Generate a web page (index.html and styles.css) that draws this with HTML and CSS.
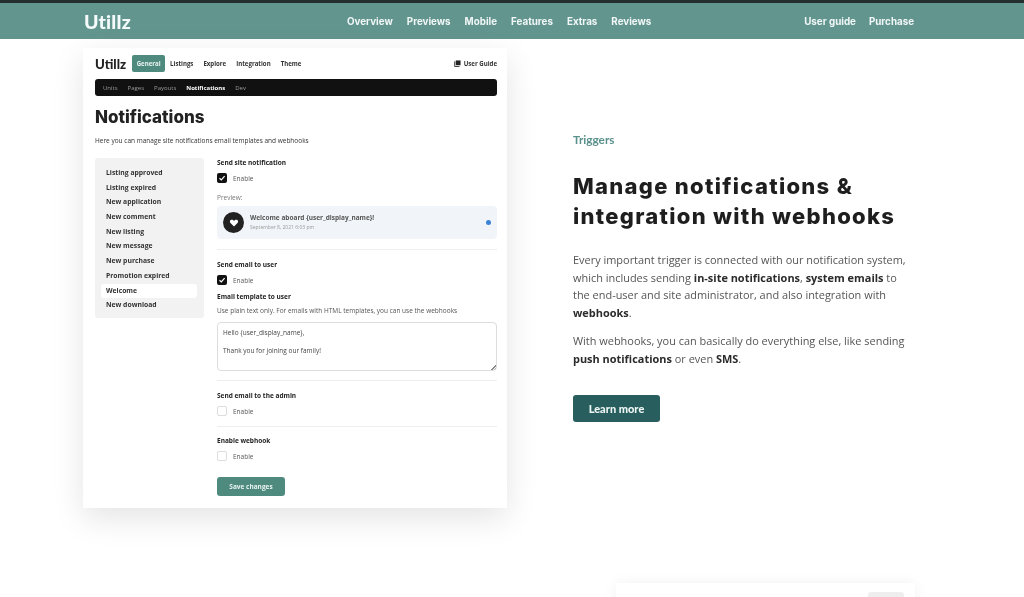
FILE: index.html
```html
<!DOCTYPE html>
<html lang="en">
<head>
<meta charset="utf-8">
<title>Utillz</title>
<link rel="stylesheet" href="styles.css">
</head>
<body>
<header class="topbar">
  <a class="logo">Utillz</a>
  <nav class="nav-main"><a>Overview</a><a>Previews</a><a>Mobile</a><a>Features</a><a>Extras</a><a>Reviews</a></nav>
  <nav class="nav-side"><a>User guide</a><a>Purchase</a></nav>
</header>
<main class="feature">
  <section class="card">
    <div class="app-head">
      <span class="app-logo">Utillz</span>
      <span class="tab tab-active">General</span>
      <span class="tab">Listings</span><span class="tab">Explore</span><span class="tab">Integration</span><span class="tab">Theme</span>
      <span class="guide">
        <svg class="guide-icon" viewBox="0 0 8 8"><path d="M2 .5h5.500v5.500h-5.500z" fill="#222"/><path d="M.8 1.500v6h5.500" fill="none" stroke="#222"/></svg>
        User Guide
      </span>
    </div>
    <div class="subnav"><span>Units</span><span>Pages</span><span>Payouts</span><span class="sub-active">Notifications</span><span>Dev</span></div>
    <h2 class="app-title">Notifications</h2>
    <p class="app-desc">Here you can manage site notifications email templates and webhooks</p>
    <div class="app-body">
      <ul class="side">
        <li>Listing approved</li><li>Listing expired</li><li>New application</li><li>New comment</li><li>New listing</li><li>New message</li><li>New purchase</li><li>Promotion expired</li><li class="side-active">Welcome</li><li>New download</li>
      </ul>
      <div class="form">
        <div class="label">Send site notification</div>
        <div class="check"><span class="box box-on"><svg viewBox="0 0 10 10"><path d="M2.500 5.200l1.800 1.700 3.300-3.700" fill="none" stroke="#fff" stroke-width="1.200"/></svg></span>Enable</div>
        <div class="preview-label">Preview:</div>
        <div class="preview">
          <span class="avatar"><svg viewBox="0 0 10 10"><path d="M5 8.500 1.500 5C.2 3.500 1.200 1.800 2.800 1.800c1 0 1.700.5 2.200 1.200.5-.7 1.200-1.200 2.200-1.200 1.600 0 2.600 1.700 1.300 3.200z" fill="#fff"/></svg></span>
          <div class="preview-text"><strong>Welcome aboard {user_display_name}!</strong><small>September 8, 2021 6:03 pm</small></div>
          <span class="dot"></span>
        </div>
        <hr class="rule rule-a">
        <div class="label">Send email to user</div>
        <div class="check"><span class="box box-on"><svg viewBox="0 0 10 10"><path d="M2.500 5.200l1.800 1.700 3.300-3.700" fill="none" stroke="#fff" stroke-width="1.200"/></svg></span>Enable</div>
        <div class="label label-tpl">Email template to user</div>
        <div class="hint">Use plain text only. For emails with HTML templates, you can use the webhooks</div>
        <div class="textarea">Hello {user_display_name},<br><br>Thank you for joining our family!</div>
        <hr class="rule rule-b">
        <div class="label">Send email to the admin</div>
        <div class="check"><span class="box"></span>Enable</div>
        <hr class="rule rule-c">
        <div class="label">Enable webhook</div>
        <div class="check"><span class="box"></span>Enable</div>
        <button class="save">Save changes</button>
      </div>
    </div>
  </section>
  <section class="copy">
    <div class="eyebrow">Triggers</div>
    <h1 class="headline">Manage notifications &amp; integration with webhooks</h1>
    <p class="para">Every important trigger is connected with our notification system, which includes sending <b>in-site notifications</b>, <b>system emails</b> to the end-user and site administrator, and also integration with <b>webhooks</b>.</p>
    <p class="para">With webhooks, you can basically do everything else, like sending <b>push notifications</b> or even <b>SMS</b>.</p>
    <a class="cta">Learn more</a>
  </section>
</main>
<div class="next-wrap"><div class="next-card"><span class="next-chip"></span></div></div>
</body>
</html>
```
FILE: styles.css
```css
* { box-sizing: border-box; }
html, body { height: 597px; overflow: hidden; }
body { margin: 0; background: #fff; color: #222; font-family: "Open Sans", sans-serif; filter: blur(.35px); }
.topbar { height: 39px; border-top: 3px solid #23302f; background: #63958f; display: flex; align-items: center; padding: 0 110px 0 84px; color: #f0f7f6; font-family: Inter, sans-serif; font-weight: 700; font-size: 9.800px; }
.logo { font-family: Lato, sans-serif; font-size: 19.500px; font-weight: 900; color: #f5fafa; width: 263px; letter-spacing: .2px; }
.nav-main, .nav-side { display: flex; gap: 14px; }
.nav-side { margin-left: auto; gap: 13px; }
.feature { display: grid; grid-template-columns: 424px 345px; column-gap: 66px; padding: 9px 0 0 83px; }
.card { height: 460px; background: #fff; box-shadow: 0 10px 30px rgba(0,0,0,.11); padding: 0 10px 0 12px; }
.app-head { height: 31px; padding-top: 0; display: flex; align-items: center; font-size: 6.100px; font-weight: 700; color: #333; }
.app-logo { font-family: Lato, sans-serif; font-weight: 900; font-size: 13.200px; color: #222; margin-right: 6px; }
.tab { margin-right: 10px; }
.tab-active { background: #4f8a7f; color: #e9f3f1; border-radius: 2px; padding: 4px 4.500px; margin-right: 5px; }
.guide { margin-left: auto; display: flex; align-items: center; gap: 3px; }
.guide-icon { width: 7px; height: 7px; }
.subnav { height: 17px; background: #111; border-radius: 3px; display: flex; align-items: center; gap: 10px; padding: 0 8px; font-size: 6px; color: #999; }
.sub-active { color: #fff; font-weight: 700; }
.app-title { margin: 10px 0 0; font-family: Inter, sans-serif; font-weight: 800; font-size: 17px; line-height: 22px; color: #222; }
.app-desc { margin: 8px 0 0; font-size: 6.500px; line-height: 10px; color: #333; }
.app-body { display: flex; gap: 13px; margin-top: 12px; align-items: flex-start; }
.side { list-style: none; margin: 0; padding: 8px 7px 6px 6px; width: 109px; height: 160px; background: #f2f2f2; border-radius: 3px; font-size: 6.800px; font-weight: 700; color: #333; }
.side li { height: 14.700px; line-height: 14.700px; padding-left: 5px; }
.side .side-active { background: #fff; border-radius: 3px; }
.form { flex: 1; font-size: 6.500px; color: #555; }
.label { font-weight: 700; color: #222; line-height: 10px; height: 10px; }
.label-tpl { margin-top: 7px; }
.check { display: flex; align-items: center; gap: 6px; height: 10px; margin-top: 5px; }
.box { width: 10px; height: 10px; border: 1px solid #ddd; border-radius: 2px; display: block; flex: none; }
.box svg { display: block; }
.box-on { background: #111; border: 0; }
.preview-label { margin-top: 10px; line-height: 10px; color: #777; }
.preview { height: 33px; margin-top: 3px; background: #f1f5f9; border-radius: 4px; display: flex; align-items: center; padding: 0 6px; gap: 6px; }
.avatar { width: 21px; height: 21px; border-radius: 50%; background: #222; display: flex; align-items: center; justify-content: center; }
.avatar svg { width: 10px; height: 10px; }
.preview-text { flex: 1; display: flex; flex-direction: column; gap: 1px; line-height: 8px; }
.preview-text strong { font-size: 6.500px; color: #555; }
.preview-text small { font-size: 5px; color: #999; }
.dot { width: 5px; height: 5px; border-radius: 50%; background: #3b82d6; }
.rule { border: 0; border-top: 1px solid #eee; margin: 0; }
.rule-a { margin: 10px 0 10px; }
.rule-b { margin: 9px 0 10px; }
.rule-c { margin: 10px 0 9px; }
.hint { line-height: 10px; margin-top: 4px; }
.textarea { height: 49px; margin-top: 6px; border: 1.500px solid #ddd; border-radius: 4px; padding: 5px 5px; line-height: 9px; color: #444; font-size: 6.500px; background: linear-gradient(135deg, transparent 50%, #888 50%, #888 62%, transparent 62%, transparent 75%, #888 75%, #888 87%, transparent 87%) no-repeat right 0 bottom 0 / 5px 5px; }
.save { display: block; margin-top: 16px; width: 68px; height: 19px; border: 0; border-radius: 3px; background: #4f8a7f; color: #e9f3f1; font: 700 6.500px "Open Sans", sans-serif; padding: 0; }
.copy { padding-top: 85px; }
.eyebrow { font-family: Lato, sans-serif; font-weight: 700; font-size: 11.800px; line-height: 14px; color: #5b918b; }
.headline { margin: 24px 0 0; width: 340px; font-family: Inter, sans-serif; font-weight: 800; font-size: 22px; line-height: 30px; color: #1e1e1e; letter-spacing: 1.300px; }
.para { margin: 20px 0 0; width: 335px; font-size: 10.950px; line-height: 17.500px; color: #555; }
.para + .para { margin-top: 11px; }
.para b { color: #2b2b2b; }
.cta { display: flex; align-items: center; justify-content: center; width: 87px; height: 27px; margin-top: 28px; background: #285f5e; border-radius: 3px; color: #eef6f5; font-family: Lato, sans-serif; font-weight: 900; font-size: 11px; }
.next-wrap { padding: 75px 0 0 616px; }
.next-card { width: 299px; height: 40px; background: #fff; box-shadow: 0 0 14px rgba(0,0,0,.06); padding: 9px 11px 0 0; display: flex; justify-content: flex-end; }
.next-chip { width: 36px; height: 20px; background: #eee; border-radius: 3px; }
```
